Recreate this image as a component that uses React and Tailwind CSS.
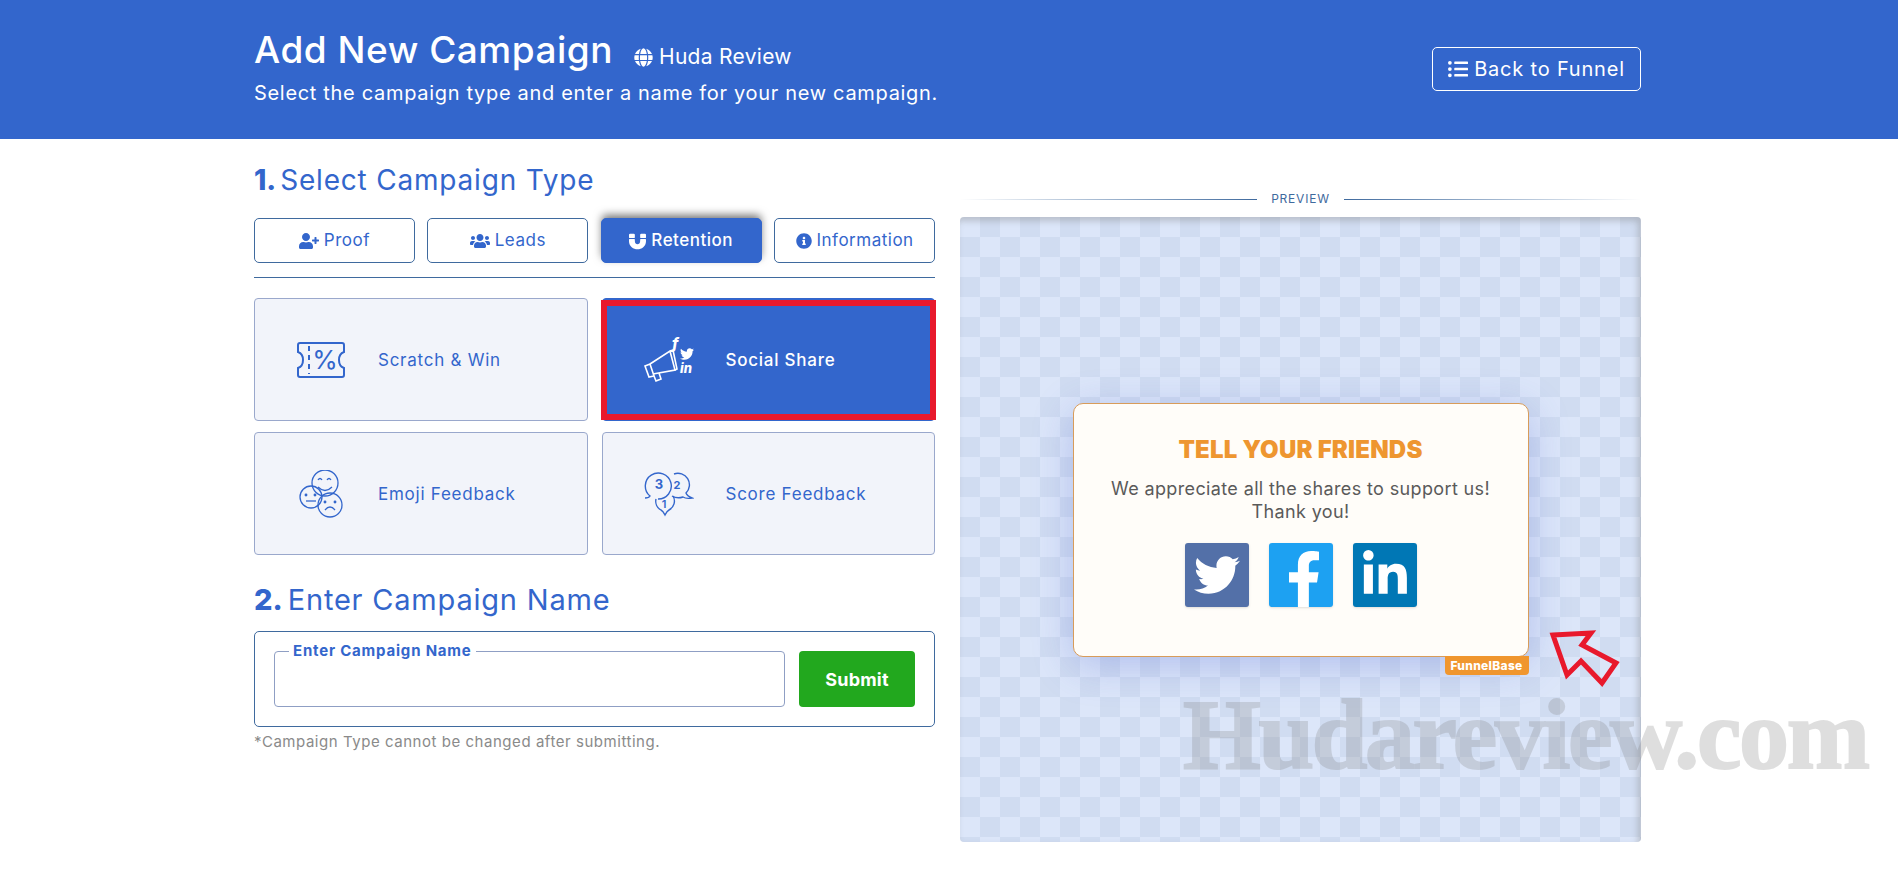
import { FaGlobe, FaListUl, FaUserPlus, FaUsers, FaMagnet, FaInfoCircle, FaTwitter, FaFacebookF, FaLinkedinIn } from "react-icons/fa";

function TicketIcon() {
  return (
    <svg width="48" height="36" viewBox="0 0 48 36" fill="none" stroke="#3366cc" strokeWidth="2">
      <path d="M3 1H45a2 2 0 0 1 2 2V10c-3 1-5 4-5 8s2 7 5 8v7a2 2 0 0 1-2 2H3a2 2 0 0 1-2-2V26c3-1 5-4 5-8s-2-7-5-8V3a2 2 0 0 1 2-2z" />
      <path d="M12 4V32" strokeDasharray="5 4" />
      <text x="28" y="27" textAnchor="middle" fontSize="26" fill="#3366cc" stroke="none" fontFamily="Inter, sans-serif">%</text>
    </svg>
  );
}

function MegaphoneIcon() {
  return (
    <svg width="50" height="44" viewBox="0 0 50 44" fill="none" stroke="#fff" strokeWidth="1.6" overflow="visible">
      <path d="M1 28L6 26L10 38L5 39z" />
      <path d="M6 26L26 13L31 32L9 36" />
      <path d="M26 13L29 12L33 31L31 32" />
      <path d="M10 38L12 43L17 41L15 35" />
      <text x="28" y="11" fontSize="15" fontWeight="800" fontStyle="italic" fill="#fff" stroke="none" fontFamily="Inter, sans-serif">f</text>
      <FaTwitter x="36" y="9" size="14" fill="#fff" stroke="none" />
      <text x="36" y="35" fontSize="13" fontWeight="800" fontStyle="italic" fill="#fff" stroke="none" fontFamily="Inter, sans-serif">in</text>
    </svg>
  );
}

function EmojiIcon() {
  return (
    <svg width="44" height="48" viewBox="0 0 44 48" fill="none" stroke="#3366cc" strokeWidth="1.3">
      <circle cx="26" cy="13" r="13" />
      <path d="M19 10q2-3 4 0M28 10q2-3 4 0M19 17q7 7 14 0" />
      <circle cx="12" cy="27" r="11" />
      <path d="M7 31H17" />
      <circle cx="7" cy="25" r="0.8" fill="#3366cc" />
      <circle cx="16" cy="25" r="0.8" fill="#3366cc" />
      <circle cx="31" cy="35" r="12" />
      <path d="M26 40q5-6 10 0" />
      <circle cx="26" cy="32" r="0.8" fill="#3366cc" />
      <circle cx="36" cy="32" r="0.8" fill="#3366cc" />
    </svg>
  );
}

function ScoreIcon() {
  return (
    <svg width="50" height="46" viewBox="0 0 50 46" fill="none" stroke="#3366cc" strokeWidth="1.4" fontFamily="Inter, sans-serif">
      <path d="M1 27q4 0 5-2a13 13 0 1 1 8 3" />
      <path d="M30 3a11.500 11.500 0 0 1 12 19q1 3 6 5q-6 1-9-1q-6 2-11-1" />
      <path d="M12 28a10 10 0 0 0 5 11q2 1 4 5q2-4 4-5a10 10 0 0 0 4-14" />
      <text x="15" y="18" textAnchor="middle" fontSize="13" fontWeight="700" fill="#3366cc" stroke="none">3</text>
      <text x="33" y="18" textAnchor="middle" fontSize="11" fontWeight="700" fill="#3366cc" stroke="none">2</text>
      <text x="20" y="37" textAnchor="middle" fontSize="11" fontWeight="600" fill="#3366cc" stroke="none">1</text>
    </svg>
  );
}

const tabs = [
  { name: "Proof", icon: FaUserPlus, iconSize: 20 },
  { name: "Leads", icon: FaUsers, iconSize: 20 },
  { name: "Retention", icon: FaMagnet, iconSize: 17, active: true },
  { name: "Information", icon: FaInfoCircle, iconSize: 16 },
];

const cards = [
  { name: "Scratch & Win", icon: TicketIcon },
  { name: "Social Share", icon: MegaphoneIcon, active: true },
  { name: "Emoji Feedback", icon: EmojiIcon },
  { name: "Score Feedback", icon: ScoreIcon },
];

export default function App() {
  return (
    <div className="relative h-[889px] overflow-hidden bg-white font-[family-name:Inter,sans-serif] text-[#3366cc]">
      {/* Header */}
      <header className="h-[139px] bg-[#3366cc] text-white">
        <div className="ml-[254px] flex w-[1387px] items-start justify-between">
          <div className="pt-[28px]">
            <div className="flex items-center">
              <h1 className="text-[37px] leading-[44px] font-medium tracking-[0.5px]">Add New Campaign</h1>
              <div className="mt-[14px] ml-[21px] flex items-center gap-[6px] text-[21px] leading-[24px] tracking-[0.3px]">
                <FaGlobe size={19} />
                <span>Huda Review</span>
              </div>
            </div>
            <p className="mt-[6px] text-[20px] leading-[30px] tracking-[0.68px]">Select the campaign type and enter a name for your new campaign.</p>
          </div>
          <button className="mt-[47px] flex h-[44px] w-[209px] items-center justify-center gap-[6px] rounded-[5px] border border-white text-[20px] tracking-[0.8px]">
            <FaListUl size={20} />
            <span>Back to Funnel</span>
          </button>
        </div>
      </header>

      <main className="ml-[254px] grid w-[1387px] grid-cols-[681px_681px] gap-x-[25px] pt-[23px]">
        {/* Left column */}
        <div>
          <h2 className="text-[28px] leading-[36px] tracking-[0.8px]">
            <b className="font-extrabold tracking-normal">1.</b>
            <span className="ml-[4px]">Select Campaign Type</span>
          </h2>
          <div className="mt-[20px] grid grid-cols-4 gap-x-[12.500px]">
            {tabs.map((tab) => (
              <button
                key={tab.name}
                className={`flex h-[45px] items-center justify-center gap-[5px] rounded-[5px] border pt-[1px] text-[17px] tracking-[0.5px] ${
                  tab.active
                    ? "border-[#3366cc] bg-[#3366cc] font-medium text-white shadow-[0_-4px_9px_-1px_rgba(0,0,0,0.55)]"
                    : "border-[#3f6a9e] bg-white"
                }`}
              >
                <tab.icon size={tab.iconSize} />
                <span>{tab.name}</span>
              </button>
            ))}
          </div>
          <div className="mt-[14px] h-px bg-[#3f6a9e]" />

          <div className="mt-[20px] grid grid-cols-2 gap-x-[14px] gap-y-[11px]">
            {cards.map((card) => (
              <div
                key={card.name}
                className={`relative flex h-[123px] items-center rounded-[4px] border ${
                  card.active ? "border-[#3366cc] bg-[#3366cc] font-medium text-white" : "border-[#9aa8cc] bg-[#f2f4fa] text-[#3366cc]"
                }`}
              >
                <div className="ml-[36px] flex w-[60px] shrink-0 justify-center">
                  <card.icon />
                </div>
                <span className="mt-[2px] ml-[27px] text-[17px] tracking-[0.75px]">{card.name}</span>
                {card.active && <div className="absolute inset-x-[-2px] top-[1px] bottom-0 border-[6px] border-[#e8192c]" />}
              </div>
            ))}
          </div>

          <h2 className="mt-[27px] text-[29px] leading-[36px] tracking-[0.8px]">
            <b className="font-extrabold tracking-normal">2.</b>
            <span className="ml-[5px]">Enter Campaign Name</span>
          </h2>
          <div className="mt-[13px] flex h-[96px] gap-[14px] rounded-[5px] border border-[#3f6a9e] px-[19px] pt-[19px]">
            <div className="relative h-[56px] flex-1">
              <input className="h-full w-full rounded-[4px] border border-[#8f9fc4] bg-white" />
              <label className="absolute top-[-10px] left-[15px] bg-white px-[4px] text-[15px] leading-[20px] font-bold tracking-[0.8px]">Enter Campaign Name</label>
            </div>
            <button className="h-[56px] w-[116px] rounded-[4px] bg-[#22a81e] text-[18px] font-bold tracking-[0.2px] text-white">Submit</button>
          </div>
          <p className="mt-[5px] text-[15px] leading-[20px] tracking-[0.54px] text-[#8a8a8a]">*Campaign Type cannot be changed after submitting.</p>
        </div>

        {/* Right column */}
        <div className="pt-[29px]">
          <div className="flex items-center gap-[14px]">
            <div className="h-px flex-1 bg-gradient-to-r from-transparent to-[#3f6a9e]" />
            <span className="text-[12px] leading-[16px] tracking-[0.8px] text-[#3f6a9e]">PREVIEW</span>
            <div className="h-px flex-1 bg-gradient-to-l from-transparent to-[#3f6a9e]" />
          </div>
          <div className="relative mt-[10px] flex h-[625px] justify-center rounded-[4px] bg-[repeating-conic-gradient(#d0dcf1_0_25%,#dce6f9_0_50%)] bg-[length:40px_40px] pt-[186px] shadow-[inset_-3px_4px_6px_rgba(120,120,120,0.35)]">
            <div className="relative h-[254px] w-[456px] rounded-[10px] border border-[#d89c5a] bg-[#fffdf9] text-center shadow-[0_8px_40px_rgba(70,90,210,0.28)]">
              <h3 className="mt-[31px] text-[24px] leading-[30px] font-black tracking-[0.2px] text-[#ee9630]">TELL YOUR FRIENDS</h3>
              <p className="mt-[12px] text-[18px] leading-[23px] tracking-[0.37px] text-[#5a5a5a]">
                We appreciate all the shares to support us!
                <br />
                Thank you!
              </p>
              <div className="mt-[20px] flex justify-center gap-[20px]">
                <div className="flex h-[64px] w-[64px] items-center justify-center rounded-[3px] bg-[#5370a8] text-white shadow-sm">
                  <FaTwitter size={46} />
                </div>
                <div className="flex h-[64px] w-[64px] items-end justify-center overflow-hidden rounded-[3px] bg-[#1da1f2] pl-[6px] text-white shadow-sm">
                  <FaFacebookF size={56} />
                </div>
                <div className="flex h-[64px] w-[64px] items-center justify-center rounded-[3px] bg-[#0077b5] text-white shadow-sm">
                  <FaLinkedinIn size={50} />
                </div>
              </div>
              <div className="absolute top-full right-[-1px] flex h-[19px] w-[84px] items-center justify-center rounded-b-[4px] bg-[#f0962e] text-[12px] font-extrabold tracking-[0.3px] text-white">FunnelBase</div>
            </div>
            {/* red annotation arrow */}
            <svg className="absolute top-[413px] left-[587px]" width="76" height="60" viewBox="0 0 76 60" fill="none" stroke="#e8192c" strokeWidth="5">
              <polygon points="6,5 44,3 35,15 69,33 55,53 34,31 20,45" />
            </svg>
          </div>
        </div>
      </main>

      {/* watermark */}
      <div className="pointer-events-none absolute top-[680px] left-[1183px] font-[family-name:'Liberation_Serif',serif] text-[100px] leading-[110px] font-bold tracking-[-2.350px] whitespace-nowrap text-[#808080] opacity-25 [-webkit-text-stroke:2px_#808080]">Hudareview.com</div>
    </div>
  );
}
